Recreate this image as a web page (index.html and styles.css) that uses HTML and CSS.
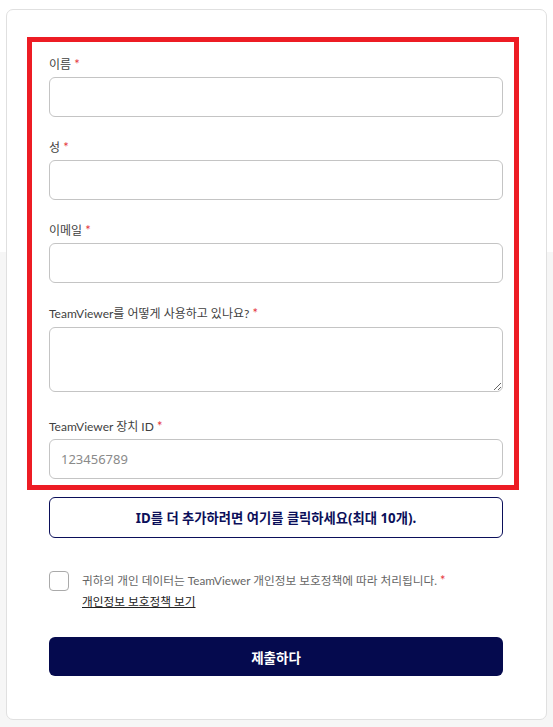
FILE: index.html
```html
<!DOCTYPE html>
<html lang="ko">
<head>
<meta charset="utf-8">
<link rel="stylesheet" href="styles.css">
</head>
<body>
<div class="card">
  <div class="highlight">
    <div class="field">
      <label class="label">이름 <span class="req">*</span></label>
      <input class="input" type="text">
    </div>
    <div class="field">
      <label class="label">성 <span class="req">*</span></label>
      <input class="input" type="text">
    </div>
    <div class="field">
      <label class="label">이메일 <span class="req">*</span></label>
      <input class="input" type="email">
    </div>
    <div class="field tall">
      <label class="label label-tall">TeamViewer를 어떻게 사용하고 있나요? <span class="req">*</span></label>
      <textarea class="input textarea"></textarea>
    </div>
    <div class="field last">
      <label class="label">TeamViewer 장치 ID <span class="req">*</span></label>
      <input class="input" type="text" placeholder="123456789">
    </div>
  </div>
  <div class="lower">
    <button class="add-btn" type="button">ID를 더 추가하려면 여기를 클릭하세요(최대 10개).</button>
    <div class="consent">
      <span class="checkbox"></span>
      <div class="consent-text">
        <div class="consent-line">귀하의 개인 데이터는 TeamViewer 개인정보 보호정책에 따라 처리됩니다. <span class="req">*</span></div>
        <a class="policy-link" href="#">개인정보 보호정책 보기</a>
      </div>
    </div>
    <button class="submit" type="button">제출하다</button>
  </div>
</div>
</body>
</html>
```

FILE: styles.css
```css
html, body {
  margin: 0;
  padding: 0;
}
body {
  width: 553px;
  height: 727px;
  overflow: hidden;
  background: linear-gradient(to bottom, #ffffff 0, #ffffff 252px, #f6f6f6 252px, #f6f6f6 100%);
  font-family: "Lato", "Noto Sans CJK KR", sans-serif;
  color: #444;
}
.card {
  box-sizing: border-box;
  margin: 9px 0 0 6px;
  width: 541px;
  height: 711px;
  background: #fff;
  border: 1px solid #e0e0e0;
  border-radius: 7px;
  padding-top: 27px;
}
.highlight {
  margin: 0 27px 0 20px;
  border: 5px solid #ed1c24;
  padding: 14px 10px 1px 17px;
}
.field {
  margin-bottom: 22px;
}
.field.tall {
  margin-bottom: 26px;
}
.field.last {
  margin-bottom: 5px;
}
.label {
  display: block;
  height: 18px;
  font-size: 12px;
  line-height: 18px;
  margin-bottom: 3px;
  color: #3f3f3f;
}
.label-tall {
  margin-bottom: 4px;
}
.req {
  color: #e5333a;
  font-size: 13px;
  line-height: 1;
}
.input {
  display: block;
  box-sizing: border-box;
  width: 454px;
  height: 40px;
  margin: 0;
  border: 1px solid #c4c4c4;
  border-radius: 6px;
  background: #fff;
  padding: 0 11px;
  font-family: "Noto Sans", "Noto Sans CJK KR", sans-serif;
  font-size: 13px;
  color: #333;
  outline: none;
}
.input::placeholder {
  color: #8a8a8a;
}
.textarea {
  height: 65px;
  resize: vertical;
  padding: 8px 11px;
}
.lower {
  padding: 7px 42px 0 42px;
}
.add-btn {
  display: block;
  box-sizing: border-box;
  width: 454px;
  height: 41px;
  margin: 0;
  border: 1px solid #0b0f5a;
  border-radius: 6px;
  background: #fff;
  color: #0b0f5a;
  font-family: "Noto Sans", "Noto Sans CJK KR", sans-serif;
  font-size: 13.3px;
  font-weight: 700;
  cursor: pointer;
}
.consent {
  display: flex;
  align-items: flex-start;
  margin-top: 32px;
}
.checkbox {
  flex: none;
  box-sizing: border-box;
  width: 20px;
  height: 20px;
  border: 1px solid #aaa;
  border-radius: 4px;
  background: #fff;
  margin-top: 1px;
}
.consent-text {
  margin-left: 13px;
  font-size: 11.7px;
  line-height: 21px;
  color: #666;
}
.consent-line {
  height: 21px;
}
.policy-link {
  display: block;
  height: 21px;
  color: #222;
  text-decoration: underline;
}
.submit {
  display: block;
  box-sizing: border-box;
  width: 454px;
  height: 39px;
  margin-top: 25px;
  border: none;
  border-radius: 6px;
  background: #050a4e;
  color: #fff;
  font-family: "Noto Sans", "Noto Sans CJK KR", sans-serif;
  font-size: 13.5px;
  font-weight: 700;
  cursor: pointer;
}
```
